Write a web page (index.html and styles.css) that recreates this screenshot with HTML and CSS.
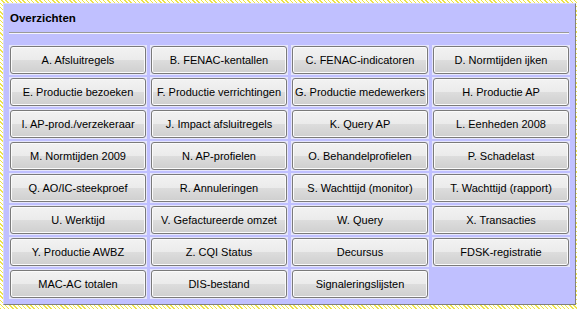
FILE: index.html
```html
<!DOCTYPE html>
<html lang="nl">
<head>
    <meta charset="UTF-8">
    <title>Overzichten</title>
    <link rel="stylesheet" href="styles.css">
</head>
<body>
    <div class="panel">
        <h1 class="title">Overzichten</h1>
        <hr class="divider">

        <div class="grid">
            <div class="cell"><button class="btn">A. Afsluitregels</button></div>
            <div class="cell"><button class="btn">B. FENAC-kentallen</button></div>
            <div class="cell"><button class="btn">C. FENAC-indicatoren</button></div>
            <div class="cell"><button class="btn">D. Normtijden ijken</button></div>

            <div class="cell"><button class="btn">E. Productie bezoeken</button></div>
            <div class="cell"><button class="btn">F. Productie verrichtingen</button></div>
            <div class="cell"><button class="btn">G. Productie medewerkers</button></div>
            <div class="cell"><button class="btn">H. Productie AP</button></div>

            <div class="cell"><button class="btn">I. AP-prod./verzekeraar</button></div>
            <div class="cell"><button class="btn">J. Impact afsluitregels</button></div>
            <div class="cell"><button class="btn">K. Query AP</button></div>
            <div class="cell"><button class="btn">L. Eenheden 2008</button></div>

            <div class="cell"><button class="btn">M. Normtijden 2009</button></div>
            <div class="cell"><button class="btn">N. AP-profielen</button></div>
            <div class="cell"><button class="btn">O. Behandelprofielen</button></div>
            <div class="cell"><button class="btn">P. Schadelast</button></div>

            <div class="cell"><button class="btn">Q. AO/IC-steekproef</button></div>
            <div class="cell"><button class="btn">R. Annuleringen</button></div>
            <div class="cell"><button class="btn">S. Wachttijd (monitor)</button></div>
            <div class="cell"><button class="btn">T. Wachttijd (rapport)</button></div>

            <div class="cell"><button class="btn">U. Werktijd</button></div>
            <div class="cell"><button class="btn">V. Gefactureerde omzet</button></div>
            <div class="cell"><button class="btn">W. Query</button></div>
            <div class="cell"><button class="btn">X. Transacties</button></div>

            <div class="cell"><button class="btn">Y. Productie AWBZ</button></div>
            <div class="cell"><button class="btn">Z. CQI Status</button></div>
            <div class="cell"><button class="btn">Decursus</button></div>
            <div class="cell"><button class="btn">FDSK-registratie</button></div>

            <div class="cell"><button class="btn">MAC-AC totalen</button></div>
            <div class="cell"><button class="btn">DIS-bestand</button></div>
            <div class="cell"><button class="btn">Signaleringslijsten</button></div>
        </div>
    </div>
</body>
</html>
```

FILE: styles.css
```css
:root {
    --panel-bg: #c0c0ff;
    --cell-bg: #e6e6fb;
    --border-dark: #7a7a7a;
    --text-color: #000000;
}

* {
    margin: 0;
    padding: 0;
    box-sizing: border-box;
}

body {
    width: 577px;
    height: 309px;
    padding: 3px 1px 4px 3px;
    font-family: "Liberation Sans", Arial, sans-serif;
    color: var(--text-color);
    background-color: #fffff2;
    background-image: repeating-linear-gradient(45deg, #eee24a 0 1px, #fffff2 1px 3px);
}

.panel {
    height: 302px;
    background-color: var(--panel-bg);
    border-top: 1px solid #d8d8ff;
    border-left: 1px solid #d8d8ff;
    border-right: 1px solid #808080;
    border-bottom: 1px solid #808080;
    padding: 6px 3px 0 5px;
}

.title {
    font-size: 11.5px;
    font-weight: bold;
    line-height: 16px;
    padding-left: 1px;
}

.divider {
    border: none;
    border-top: 1px solid #9a9a9a;
    border-bottom: 1px solid #f4f4ff;
    margin: 6px 3px 11px 0;
}

.grid {
    display: grid;
    grid-template-columns: repeat(4, 138px);
    grid-auto-rows: 30px;
    column-gap: 3px;
    row-gap: 2px;
}

.cell {
    background-color: var(--cell-bg);
    padding: 1px;
}

.btn {
    display: block;
    width: 100%;
    height: 100%;
    padding: 0;
    border: 1px solid var(--border-dark);
    border-radius: 3px;
    background: linear-gradient(#f2f2f2 0%, #ebebeb 50%, #dddddd 50%, #cfcfcf 100%);
    box-shadow: inset 0 0 0 1px #fbfbfb;
    font-family: inherit;
    font-size: 11px;
    color: var(--text-color);
    white-space: nowrap;
    cursor: pointer;
}

.btn:hover {
    background: linear-gradient(#eaf6fd 0%, #d9f0fc 50%, #bee6fd 50%, #a7d9f5 100%);
    border-color: #3c7fb1;
}
```
